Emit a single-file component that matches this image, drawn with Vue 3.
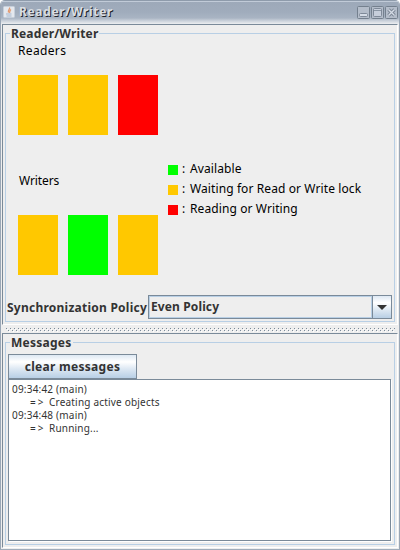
<script setup>
import { ref } from 'vue'

const readers = ref(['waiting', 'waiting', 'active'])
const writers = ref(['waiting', 'available', 'waiting'])
const legend = [
  { state: 'available', label: 'Available' },
  { state: 'waiting', label: 'Waiting for Read or Write lock' },
  { state: 'active', label: 'Reading or Writing' },
]
const messages = [
  { time: '09:34:42 (main)', text: 'Creating active objects' },
  { time: '09:34:48 (main)', text: 'Running...' },
]
</script>

<template>
  <div class="window">
    <header class="titlebar">
      <svg class="app-icon" width="12" height="12" viewBox="0 0 12 12">
        <rect x="0.5" y="0.5" width="11" height="11" rx="1" fill="#e4e8ee" stroke="#c6cfda" />
        <path d="M6.5 1.5C7.5 3 4.5 4 5.5 6.5M8 3.5C6.5 4.5 7 5.5 6.5 7" stroke="#e39a70" stroke-width="1.3" fill="none" />
        <path d="M3 8h5.5M3.5 10h5" stroke="#a5b7ce" fill="none" />
      </svg>
      <h1>Reader/Writer</h1>
      <svg class="controls" width="41" height="13" viewBox="0 0 41 13" fill="none">
        <g stroke="#74808e">
          <rect x="0.5" y="0.5" width="12" height="12" rx="1" fill="#b4bdca" />
          <rect x="14.5" y="0.5" width="12" height="12" rx="1" fill="#b4bdca" />
          <rect x="28.5" y="0.5" width="12" height="12" rx="1" fill="#b4bdca" />
        </g>
        <rect x="2.5" y="7.5" width="8" height="3" rx="1" stroke="#7e8998" fill="#d5dce6" />
        <rect x="16.5" y="2.5" width="8" height="8" rx="1" stroke="#7e8998" fill="#c6cedb" />
        <path d="M17 4.5h7" stroke="#8995a4" />
        <path d="M31.5 3.5l6 6m0-6l-6 6" stroke="#7e8998" stroke-width="3.4" />
        <path d="M31.5 3.5l6 6m0-6l-6 6" stroke="#d5dce6" stroke-width="1.3" />
      </svg>
    </header>

    <main class="split">
      <section class="pane top-pane">
        <fieldset class="group">
          <legend>Reader/Writer</legend>
          <div class="canvas">
            <div class="actors">
              <p class="readers">Readers</p>
              <div class="bars">
                <i v-for="(s, n) in readers" :key="n" class="bar" :class="s"></i>
              </div>
              <p class="writers">Writers</p>
              <div class="bars writer-bars">
                <i v-for="(s, n) in writers" :key="n" class="bar" :class="s"></i>
              </div>
            </div>
            <ul class="legend">
              <li v-for="item in legend" :key="item.state">
                <i class="swatch" :class="item.state"></i>
                <span class="colon">:</span>
                <span>{{ item.label }}</span>
              </li>
            </ul>
          </div>
          <div class="policy">
            <label>Synchronization Policy</label>
            <div class="combo">
              <div class="value">Even Policy</div>
              <div class="arrow">
                <svg width="10" height="5" viewBox="0 0 10 5"><path d="M0 0h10L5 5z" fill="#333" /></svg>
              </div>
            </div>
          </div>
        </fieldset>
      </section>

      <div class="divider">
        <svg width="100%" height="4">
          <defs>
            <pattern id="bumps" width="4" height="4" patternUnits="userSpaceOnUse" shape-rendering="crispEdges">
              <path d="M0 0h1v1h-1zM2 2h1v1h-1z" fill="#7a8a99" />
              <path d="M1 1h1v1h-1zM3 3h1v1h-1z" fill="#fff" />
            </pattern>
          </defs>
          <rect width="100%" height="4" fill="url(#bumps)" />
        </svg>
      </div>

      <section class="pane bottom-pane">
        <fieldset class="group">
          <legend>Messages</legend>
          <button type="button">clear messages</button>
          <div class="log">
            <template v-for="m in messages" :key="m.time">
              <p class="time">{{ m.time }}</p>
              <p class="msg"><span class="marker">=&gt;</span>{{ m.text }}</p>
            </template>
          </div>
        </fieldset>
      </section>
    </main>
  </div>
</template>

<style>
body { margin: 0; background: #fff; overflow: hidden; }
</style>

<style scoped>
* { box-sizing: border-box; margin: 0; padding: 0; }
.window {
  width: 400px; height: 550px; display: flex; flex-direction: column;
  border: 1px solid #9aa7b6; border-top: 0; border-bottom-color: #a0acba;
  border-radius: 5px 5px 0 0; overflow: hidden;
  background: #eee; color: #333;
  font-family: "Noto Sans", "Open Sans", sans-serif;
  white-space: nowrap;
}
.titlebar {
  height: 24px; flex: none; display: flex; align-items: center;
  padding: 0 1px 0 2px;
  background: linear-gradient(#8e9bab 0, #8e9bab 1px, #c1cbd8 1px, #c1cbd8 2px, #9da9b9 2px, #a0acbc 12px, #a9b4c3 18px, #ccd3dc 21px, #eceef0 24px);
}
.app-icon { flex: none; }
h1 { font-size: 12px; font-weight: 700; line-height: 24px; color: #d9dde2; text-shadow: 1px 1px 0 #20252b; margin-left: 4px; letter-spacing: 0.66px; }
.controls { margin-left: auto; flex: none; }
.split { flex: 1; display: flex; flex-direction: column; padding: 0 1px 1px; }
.pane { border: 1px solid #7a8a99; border-right-color: #fff; border-bottom-color: #fff; padding: 0 2px; }
.top-pane { height: 301px; }
.bottom-pane { height: 215px; }
.group { position: relative; border: 0; height: 100%; display: flex; flex-direction: column; min-width: 0; }
.group::before { content: ""; position: absolute; inset: 8px 0 2px 0; border: 1px solid #b8cfe5; pointer-events: none; }
legend { position: absolute; left: 5px; top: 0; padding: 0 1px; line-height: 17px; background: #eee; font-size: 12px; font-weight: 700; letter-spacing: 0.15px; }
.bottom-pane legend { letter-spacing: 0.25px; }
.canvas { height: 270px; padding: 18px 0 0 13px; display: flex; color: #000; font-size: 12px; }
.actors { width: 150px; }
.actors p { height: 16px; line-height: 16px; }
.actors .readers { letter-spacing: 0.35px; }
.bars { display: flex; gap: 10px; margin-top: 16px; }
.actors .writers { margin-top: 38px; letter-spacing: -0.1px; padding-left: 1px; }
.writer-bars { margin-top: 26px; }
.bar { width: 40px; height: 60px; }
.available { background: #0f0; }
.waiting { background: #ffc800; }
.active { background: #f00; }
.legend { list-style: none; padding-top: 117px; letter-spacing: 0.1px; }
.legend li { display: flex; height: 20px; line-height: 18px; }
.swatch { width: 10px; height: 10px; margin-top: 5px; }
.colon { width: 12px; padding-left: 4px; }
.policy { display: flex; height: 24px; padding: 0 2px; }
label { width: 141px; font-size: 12px; font-weight: 700; line-height: 26px; letter-spacing: 0.24px; }
.combo { width: 244px; flex: none; display: flex; border: 1px solid #7a8a99; }
.value { flex: 1; border: 1px solid #b8cfe5; padding-left: 1px; font-size: 12px; font-weight: 700; line-height: 20px; letter-spacing: 0.12px; }
.arrow { width: 19px; border-left: 1px solid #7a8a99; display: flex; align-items: center; justify-content: center; background: linear-gradient(#dde8f3 0, #fff 30%, #b8cfe5); }
.divider { height: 8px; padding: 3px 3px 0 4px; }
.divider svg { display: block; }
button {
  width: 129px; height: 25px; margin: 20px 0 0 3px; border: 1px solid #7a8a99; flex: none;
  background: linear-gradient(#dde8f3 0, #fff 30%, #dde8f3 60%, #b8cfe5);
  font: 700 12px/22px "Noto Sans", "Open Sans", sans-serif; color: #333; letter-spacing: 0.28px;
}
.log { width: 383px; height: 162px; margin-left: 3px; flex: none; border: 1px solid #7a8a99; background: #fff; box-shadow: 1px 1px 0 #fff; padding: 3px; font-size: 10px; line-height: 13px; letter-spacing: 0.2px; }
.log p { height: 13px; display: flex; }
.msg { padding-left: 18px; }
.marker { width: 19px; letter-spacing: 2px; }
</style>
